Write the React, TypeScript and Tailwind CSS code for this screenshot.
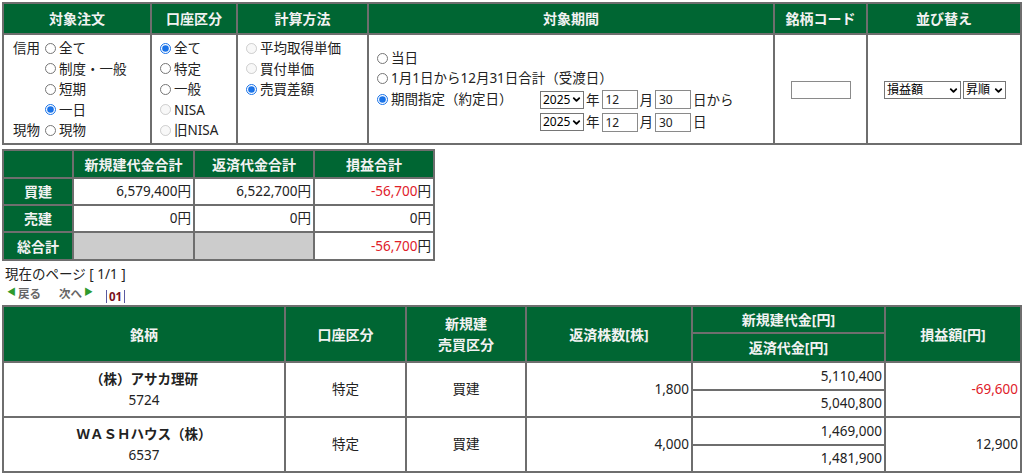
import React from 'react'
import { ChevronDown } from 'lucide-react'

const font = { fontFamily: '"Noto Sans", "Noto Sans CJK JP", sans-serif' }

function Radio({ label, checked, disabled }: { label: string; checked?: boolean; disabled?: boolean }) {
  return (
    <label className="flex items-center h-[20.5px] whitespace-nowrap">
      <input
        type="radio"
        defaultChecked={checked}
        disabled={disabled}
        className="w-[11px] h-[11px] m-0 mr-[3px] accent-[#1a73e8]"
      />
      <span>{label}</span>
    </label>
  )
}

function FakeSelect({ value, width }: { value: string; width: string }) {
  return (
    <div className={`inline-flex items-center justify-between h-[18px] border border-[#767676] bg-white pl-[2px] pr-[1px] text-[12px] leading-none text-black ${width}`}>
      <span>{value}</span>
      <ChevronDown size={11} strokeWidth={4} className="text-black" />
    </div>
  )
}

function Box({ v }: { v: string }) {
  return <input defaultValue={v} className="text-[12px] h-[19px] w-[36px] border border-[#8a8a8a] px-[3px] leading-none" />
}

const th = 'bg-[#006633] text-[#f2f2f2] text-[14px] font-bold border-2 border-[#6e6e6e] text-center'
const td = 'border-2 border-[#6e6e6e] bg-white'

export default function App() {
  return (
    <div className="w-[1024px] h-[474px] bg-white text-[13.5px] text-[#222] p-[2px] overflow-hidden" style={font}>
      <table className="w-[1020px] border-collapse">
        <thead>
          <tr className="h-[31px]">
            <th className={`${th} w-[148px]`}>対象注文</th>
            <th className={`${th} w-[86px]`}>口座区分</th>
            <th className={`${th} w-[131px]`}>計算方法</th>
            <th className={`${th} w-[406px]`}>対象期間</th>
            <th className={`${th} w-[93px]`}>銘柄コード</th>
            <th className={th}>並び替え</th>
          </tr>
        </thead>
        <tbody>
          <tr className="h-[110px]">
            <td className={`${td} align-top pl-[9px] pt-[3px]`}>
              <div className="grid grid-cols-[auto_1fr] gap-x-[5px]">
                <span className="leading-[20.5px]">信用</span>
                <div>
                  <Radio label="全て" />
                  <Radio label="制度・一般" />
                  <Radio label="短期" />
                  <Radio label="一日" checked />
                </div>
                <span className="leading-[20.5px]">現物</span>
                <Radio label="現物" />
              </div>
            </td>
            <td className={`${td} align-top pl-[8px] pt-[3px]`}>
              <Radio label="全て" checked />
              <Radio label="特定" />
              <Radio label="一般" />
              <Radio label="NISA" disabled />
              <Radio label="旧NISA" disabled />
            </td>
            <td className={`${td} align-top pl-[8px] pt-[3px]`}>
              <Radio label="平均取得単価" disabled />
              <Radio label="買付単価" disabled />
              <Radio label="売買差額" checked />
            </td>
            <td className={`${td} align-middle pl-[8px] pt-[2px]`}>
              <Radio label="当日" />
              <Radio label="1月1日から12月31日合計（受渡日）" />
              <div className="flex items-start">
                <div className="w-[163px]">
                  <Radio label="期間指定（約定日）" checked />
                </div>
                <div className="flex flex-col gap-[2px] pt-[1px]">
                  <div className="flex items-center gap-[2px]">
                    <FakeSelect value="2025" width="w-[44px]" />
                    <span>年</span>
                    <Box v="12" />
                    <span>月</span>
                    <Box v="30" />
                    <span>日から</span>
                  </div>
                  <div className="flex items-center gap-[2px]">
                    <FakeSelect value="2025" width="w-[44px]" />
                    <span>年</span>
                    <Box v="12" />
                    <span>月</span>
                    <Box v="30" />
                    <span>日</span>
                  </div>
                </div>
              </div>
            </td>
            <td className={`${td} text-center align-middle`}>
              <input className="w-[60px] h-[18px] border border-[#8a8a8a] align-middle" />
            </td>
            <td className={`${td} text-center align-middle`}>
              <div className="flex justify-center gap-[2px] pl-[2px] pt-[2px]">
                <FakeSelect value="損益額" width="w-[77px]" />
                <FakeSelect value="昇順" width="w-[43px]" />
              </div>
            </td>
          </tr>
        </tbody>
      </table>

      <table className="mt-[4px] w-[433px] border-collapse">
        <thead>
          <tr className="h-[28px]">
            <th className={`${th} w-[70px]`}></th>
            <th className={`${th} w-[121px]`}>新規建代金合計</th>
            <th className={`${th} w-[120px]`}>返済代金合計</th>
            <th className={th}>損益合計</th>
          </tr>
        </thead>
        <tbody>
          <tr className="h-[27px]">
            <th className={th}>買建</th>
            <td className={`${td} text-right pr-[2px]`}>6,579,400円</td>
            <td className={`${td} text-right pr-[2px]`}>6,522,700円</td>
            <td className={`${td} text-right pr-[2px]`}><span className="text-[#e0202a]">-56,700</span>円</td>
          </tr>
          <tr className="h-[27px]">
            <th className={th}>売建</th>
            <td className={`${td} text-right pr-[2px]`}>0円</td>
            <td className={`${td} text-right pr-[2px]`}>0円</td>
            <td className={`${td} text-right pr-[2px]`}>0円</td>
          </tr>
          <tr className="h-[28px]">
            <th className={th}>総合計</th>
            <td className="border-2 border-[#6e6e6e] bg-[#cccccc]"></td>
            <td className="border-2 border-[#6e6e6e] bg-[#cccccc]"></td>
            <td className={`${td} text-right pr-[2px]`}><span className="text-[#e0202a]">-56,700</span>円</td>
          </tr>
        </tbody>
      </table>

      <div className="mt-[3px] pl-[3px] leading-[20px]">現在のページ [ 1/1 ]</div>
      <div className="flex items-center pl-[5px] h-[20px] text-[11.5px] font-bold text-[#666]">
        <span className="text-[#2e9a2e] text-[9px] mr-[2px] -mt-[4px]">◀</span>
        <span>戻る</span>
        <span className="ml-[18px]">次へ</span>
        <span className="text-[#2e9a2e] text-[9px] ml-[2px] -mt-[4px]">▶</span>
        <span className="ml-[13px] mt-[4px] border-l border-r border-[#5a5aa0] px-[2px] text-[#7a1020] leading-[13px]">01</span>
      </div>

      <table className="mt-[1px] w-[1020px] border-collapse">
        <thead>
          <tr className="h-[27px]">
            <th rowSpan={2} className={`${th} w-[282px]`}>銘柄</th>
            <th rowSpan={2} className={`${th} w-[121px]`}>口座区分</th>
            <th rowSpan={2} className={`${th} w-[120px] leading-[21px]`}>新規建<br />売買区分</th>
            <th rowSpan={2} className={`${th} w-[166px]`}>返済株数[株]</th>
            <th className={`${th} w-[193px]`}>新規建代金[円]</th>
            <th rowSpan={2} className={th}>損益額[円]</th>
          </tr>
          <tr className="h-[29px]">
            <th className={th}>返済代金[円]</th>
          </tr>
        </thead>
        <tbody>
          <tr className="h-[27.5px]">
            <td rowSpan={2} className={`${td} text-center leading-[21px]`}>
              <div className="font-bold">（株）アサカ理研</div>
              <div>5724</div>
            </td>
            <td rowSpan={2} className={`${td} text-center`}>特定</td>
            <td rowSpan={2} className={`${td} text-center`}>買建</td>
            <td rowSpan={2} className={`${td} text-right pr-[2px]`}>1,800</td>
            <td className={`${td} text-right pr-[2px]`}>5,110,400</td>
            <td rowSpan={2} className={`${td} text-right pr-[2px] text-[#e0202a]`}>-69,600</td>
          </tr>
          <tr className="h-[27.5px]">
            <td className={`${td} text-right pr-[2px]`}>5,040,800</td>
          </tr>
          <tr className="h-[27.5px]">
            <td rowSpan={2} className={`${td} text-center leading-[21px]`}>
              <div className="font-bold">ＷＡＳＨハウス（株）</div>
              <div>6537</div>
            </td>
            <td rowSpan={2} className={`${td} text-center`}>特定</td>
            <td rowSpan={2} className={`${td} text-center`}>買建</td>
            <td rowSpan={2} className={`${td} text-right pr-[2px]`}>4,000</td>
            <td className={`${td} text-right pr-[2px]`}>1,469,000</td>
            <td rowSpan={2} className={`${td} text-right pr-[2px]`}>12,900</td>
          </tr>
          <tr className="h-[27.5px]">
            <td className={`${td} text-right pr-[2px]`}>1,481,900</td>
          </tr>
        </tbody>
      </table>
    </div>
  )
}
